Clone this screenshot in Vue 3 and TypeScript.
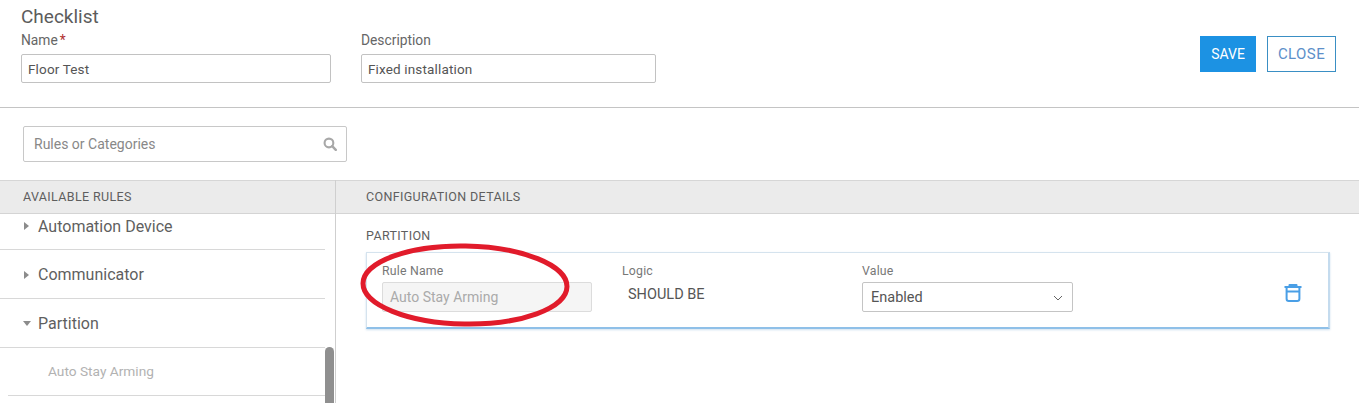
<script setup lang="ts">
const rules = [
  { label: 'Automation Device', open: false },
  { label: 'Communicator', open: false },
  { label: 'Partition', open: true },
]
</script>

<template>
  <div class="page">
    <header class="top">
      <div class="top-form">
        <h1 class="title">Checklist</h1>
        <div class="fields">
          <div class="field name-field">
            <label class="label">Name<span class="req">*</span></label>
            <div class="input">Floor Test</div>
          </div>
          <div class="field desc-field">
            <label class="label">Description</label>
            <div class="input">Fixed installation</div>
          </div>
        </div>
      </div>
      <div class="actions">
        <button class="btn save">SAVE</button>
        <button class="btn close">CLOSE</button>
      </div>
    </header>

    <div class="search-row">
      <div class="search">
        <span>Rules or Categories</span>
        <svg class="search-icon" viewBox="0 0 16 16" width="14" height="14">
          <circle cx="6.8" cy="6.8" r="5" fill="none" stroke="currentColor" stroke-width="2.4" />
          <path d="M10.5 10.5 14.6 14.6" fill="none" stroke="currentColor" stroke-width="2.8" stroke-linecap="round" />
        </svg>
      </div>
    </div>

    <div class="columns">
      <aside class="left">
        <div class="band">AVAILABLE RULES</div>
        <div class="rule-list">
          <div v-for="rule in rules" :key="rule.label" :class="['rule', { 'is-open': rule.open }]">
            <span class="caret"></span>
            <span>{{ rule.label }}</span>
          </div>
          <div class="sub-rule">Auto Stay Arming</div>
          <div class="scrollbar"></div>
        </div>
      </aside>

      <section class="right">
        <div class="band band-right">CONFIGURATION DETAILS</div>
        <div class="details">
          <div class="section-name">PARTITION</div>
          <div class="card">
            <div class="col col-name">
              <div class="small">Rule Name</div>
              <div class="input-sm disabled">Auto Stay Arming</div>
            </div>
            <div class="col col-logic">
              <div class="small">Logic</div>
              <div class="logic-value">SHOULD BE</div>
            </div>
            <div class="col col-value">
              <div class="small">Value</div>
              <div class="input-sm select">
                <span>Enabled</span>
                <svg viewBox="0 0 10 6" width="10" height="6">
                  <path d="M1 1 5 5 9 1" fill="none" stroke="#666" stroke-width="1" />
                </svg>
              </div>
            </div>
            <svg class="trash" viewBox="0 0 18 18" width="18" height="18">
              <path d="M5.5 2.6V1h7v1.6M.5 3h17M2.6 3v11.8c0 1.3.9 2.2 2.2 2.2h8.4c1.3 0 2.2-.9 2.2-2.2V3M2.6 7.4h12.8" fill="none" stroke="currentColor" stroke-width="2" stroke-linejoin="round" />
            </svg>
          </div>
        </div>
      </section>
    </div>

    <svg class="marker" viewBox="0 0 220 96" width="220" height="96">
      <ellipse cx="110" cy="48" rx="102" ry="39" transform="rotate(1 110 48)" fill="none" stroke="#e11b2b" stroke-width="5" />
    </svg>
  </div>
</template>

<style scoped>
.page {
  position: relative; width: 1359px; height: 403px; overflow: hidden;
  background: #fff; color: #606060;
  font-family: Roboto, "Liberation Sans", sans-serif;
}

.top {
  height: 107px;
  border-bottom: 1px solid #c4c4c4;
  display: flex; justify-content: space-between;
  padding-left: 21px; padding-right: 23px;
}
.title { margin: 7px 0 0; font-size: 19px; line-height: 20px; font-weight: 400; color: #5c5c5c; }
.fields { display: flex; gap: 30px; margin-top: 5px; }
.field { display: flex; flex-direction: column; }
.name-field { width: 310px; }
.desc-field { width: 295px; }
.label { font-size: 13.8px; line-height: 16px; height: 16px; color: #666; margin-bottom: 6px; }
.req { color: #b03030; margin-left: 2px; }
.input {
  height: 29px; box-sizing: border-box; border: 1px solid #c2c2c2; border-radius: 2px;
  padding-left: 6px; font-size: 13.5px; line-height: 28px; color: #555; letter-spacing: 0.15px;
}

.actions { display: flex; gap: 11px; margin-top: 36px; align-items: flex-start; }
.btn { height: 36px; box-sizing: border-box; font-family: inherit; font-size: 14px; padding: 0; border-radius: 0; }
.save { width: 56px; background: #1c92e3; border: none; color: #fff; }
.close { width: 69px; background: #fff; border: 1px solid #3a8fc4; color: #5d8fc9; font-size: 15px; letter-spacing: 0.4px; }

.search-row { padding: 18px 0 18px 23px; }
.search {
  width: 324px; height: 36px; box-sizing: border-box;
  border: 1px solid #c8c8c8; border-radius: 2px;
  padding: 0 9px 0 10px;
  display: flex; align-items: center; justify-content: space-between;
  font-size: 14px; color: #888;
}
.search-icon { color: #a8a8a8; }

.columns { display: flex; height: 223px; }
.left { width: 335px; flex: none; }
.right { flex: 1; border-left: 1px solid #cfcfcf; }
.band {
  height: 34px; box-sizing: border-box;
  background: #ebebeb; border-top: 1px solid #d6d6d6; border-bottom: 1px solid #d4d4d4;
  padding-left: 23px; font-size: 12.5px; line-height: 32px; color: #5e5e5e; letter-spacing: 0.35px;
}
.band-right { padding-left: 30px; }

.rule-list { position: relative; height: 189px; }
.rule {
  width: 325px; height: 49px; box-sizing: border-box;
  border-bottom: 1px solid #d8d8d8;
  padding: 1px 0 0 23px;
  display: flex; align-items: center; gap: 7px;
  font-size: 16px; color: #5f5f5f;
}
.rule:first-child { height: 36px; padding-top: 0; padding-bottom: 11px; }
.caret {
  width: 0; height: 0; margin-left: 1px; margin-right: 2px;
  border-left: 5px solid #8c8c8c; border-top: 4px solid transparent; border-bottom: 4px solid transparent;
}
.is-open .caret {
  margin-left: 0; margin-right: 0;
  border-top: 5px solid #8c8c8c; border-left: 4.5px solid transparent; border-right: 4.5px solid transparent; border-bottom: none;
}
.sub-rule {
  width: 317px; height: 48px; margin-left: 8px; box-sizing: border-box;
  border-bottom: 1px solid #d8d8d8;
  padding-left: 40px; font-size: 13.7px; line-height: 47px; color: #b2b2b2;
}
.scrollbar {
  position: absolute; left: 325px; top: 133px; width: 9px; height: 60px;
  background: #8f8f8f; border-radius: 5px 5px 0 0;
}

.details { padding: 15px 29px 0 30px; }
.section-name { font-size: 12.5px; line-height: 14px; color: #5e5e5e; letter-spacing: 0.35px; margin-bottom: 9px; }
.card {
  height: 77px; box-sizing: border-box;
  border: 1px solid #d5e3ee; border-bottom: 2px solid #8fc0e8; border-right: 2px solid #c4dbee;
  padding: 11px 26px 0 15px;
  display: flex; align-items: flex-start;
  box-shadow: 0 1px 2px rgba(60,130,190,0.25);
}
.col { display: flex; flex-direction: column; }
.col-name { width: 240px; }
.col-logic { width: 240px; }
.col-value { width: 211px; }
.small { font-size: 12.3px; line-height: 14px; height: 18px; color: #777; letter-spacing: 0.2px; }
.input-sm {
  height: 30px; box-sizing: border-box; border: 1px solid #c4c4c4; border-radius: 2px;
  padding: 1px 9px 0 8px; font-size: 14.5px; line-height: 27px; color: #555;
}
.disabled { width: 210px; padding: 0 0 0 7px; line-height: 28px; background: #f5f5f5; border-color: #dcdcdc; color: #aaa; font-size: 14px; }
.logic-value { font-size: 14.5px; line-height: 26px; padding-left: 6px; color: #555; }
.select { display: flex; align-items: center; justify-content: space-between; }
.trash { margin-left: auto; margin-top: 20px; color: #4a9fe6; }

.marker { position: absolute; left: 355px; top: 237px; pointer-events: none; }
</style>
